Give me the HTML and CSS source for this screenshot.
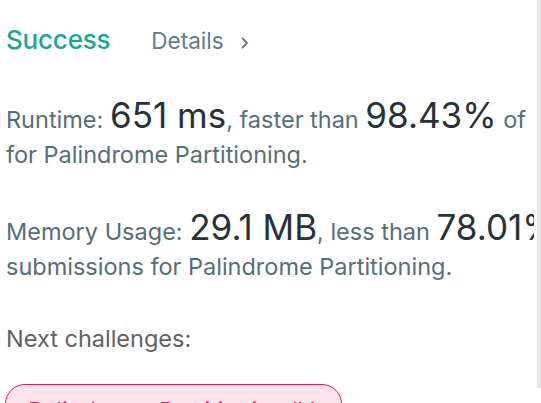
FILE: index.html
```html
<!DOCTYPE html>
<html lang="en">
<head>
<meta charset="utf-8">
<title>Success</title>
<link rel="stylesheet" href="styles.css">
</head>
<body>
<div class="page">
  <main class="result">
    <div class="header">
      <span class="status">Success</span>
      <a class="details">Details <svg class="chev" width="8" height="12" viewBox="0 0 8 12"><path d="M1.5 1.5 L6 6 L1.5 10.5" fill="none" stroke="currentColor" stroke-width="1.8" stroke-linecap="round" stroke-linejoin="round"/></svg></a>
    </div>
    <p class="stat">Runtime: <span class="num">651 ms</span>, faster than <span class="num">98.43%</span> of Python3 online submissions<br>for Palindrome Partitioning.</p>
    <p class="stat">Memory Usage: <span class="num">29.1 MB</span>, less than <span class="num">78.01%</span> of Python3 online<br>submissions for Palindrome Partitioning.</p>
    <p class="next">Next challenges:</p>
    <div class="tags">
      <span class="tag">Palindrome Partitioning IV</span>
    </div>
  </main>
  <div class="rail"></div>
</div>
</body>
</html>
```
FILE: styles.css
```css
html, body {
  margin: 0;
  padding: 0;
  background: #ffffff;
}
body {
  font-family: Inter, "Noto Sans", "Liberation Sans", sans-serif;
  overflow: hidden;
}
.page {
  display: flex;
  width: 541px;
  height: 403px;
}
.result {
  flex: 1;
  min-width: 0;
  overflow: hidden;
  white-space: nowrap;
  padding-left: 6px;
  margin-right: 3px;
}
.rail {
  width: 4px;
  height: 388px;
  background: #e4e4e4;
  flex: none;
}
.header {
  display: flex;
  align-items: baseline;
  gap: 41px;
  padding-top: 24px;
  height: 33px;
}
.status {
  color: #1ba596;
  font-size: 26px;
  font-weight: 500;
  letter-spacing: -0.2px;
}
.details {
  color: #607d8b;
  font-size: 22.5px;
  display: inline-flex;
  align-items: baseline;
  gap: 17px;
}
.chev {
  width: 8px;
  height: 12px;
}
.stat {
  margin: 0;
  color: #546e7a;
  font-size: 23.5px;
  line-height: 35px;
}
.stat:first-of-type {
  margin-top: 41px;
}
.stat + .stat {
  margin-top: 38px;
}
.num {
  color: #263238;
  font-size: 35px;
}
.next {
  margin: 40px 0 0;
  color: #616161;
  font-size: 23.5px;
  line-height: 30px;
}
.tags {
  margin-top: 30px;
  display: flex;
}
.tag {
  margin-left: -1px;
  display: inline-block;
  padding: 12px 26px 8px 22px;
  border: 1px solid #d81b60;
  border-radius: 20px;
  background: #fde4ec;
  color: #d81b60;
  font-size: 23.5px;
  line-height: 28px;
}
```
